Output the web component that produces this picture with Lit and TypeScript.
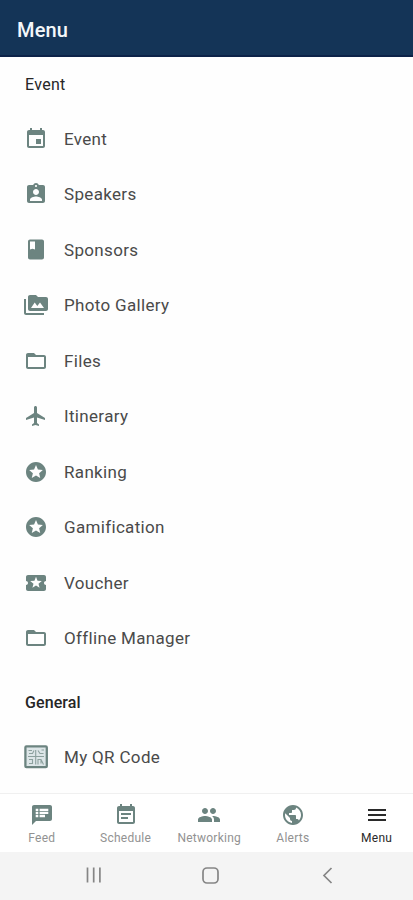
import { LitElement, html, css, svg } from "lit";
import { customElement } from "lit/decorators.js";

const icons: Record<string, string> = {
  event:
    "M17 12h-5v5h5v-5zM16 1v2H8V1H6v2H5c-1.11 0-1.99.9-1.99 2L3 19c0 1.1.89 2 2 2h14c1.1 0 2-.9 2-2V5c0-1.1-.9-2-2-2h-1V1h-2zm3 18H5V8h14v11z",
  speakers:
    "M19 3h-4.18C14.4 1.84 13.3 1 12 1c-1.3 0-2.4.84-2.82 2H5c-1.1 0-2 .9-2 2v14c0 1.1.9 2 2 2h14c1.1 0 2-.9 2-2V5c0-1.1-.9-2-2-2zm-7 0c.55 0 1 .45 1 1s-.45 1-1 1-1-.45-1-1 .45-1 1-1zm0 4c1.66 0 3 1.34 3 3s-1.34 3-3 3-3-1.34-3-3 1.34-3 3-3zm6 12H6v-1.4c0-2 4-3.1 6-3.1s6 1.1 6 3.1V19z",
  book: "M18 1.500H6c-1.1 0-2 .9-2 2v16c0 1.1.9 2 2 2h12c1.1 0 2-.9 2-2v-16c0-1.1-.9-2-2-2zM6 3.500h5v8l-2.500-.8L6 11.500v-8z",
  gallery:
    "M2 6H0v14c0 1.100.9 2 2 2h18v-2H2V6zm20-2h-8l-2-2H6c-1.1 0-1.990.9-1.990 2L4 16c0 1.1.9 2 2 2h16c1.1 0 2-.9 2-2V6c0-1.1-.9-2-2-2zM7 15l3.700-5.500 2.600 3.500 2.700-3.500L20 15H7z",
  folder:
    "M20 6h-8l-2-2H4c-1.1 0-1.99.9-1.99 2L2 18c0 1.1.9 2 2 2h16c1.1 0 2-.9 2-2V8c0-1.1-.9-2-2-2zm0 12H4V8h16v10z",
  plane:
    "M21 16v-2l-8-5V3.500c0-.83-.67-1.500-1.500-1.500S10 2.670 10 3.500V9l-8 5v2l8-2.500V19l-2 1.500V22l3.500-1 3.500 1v-1.500L13 19v-5.500l8 2.500z",
  star: "M11.99 2C6.47 2 2 6.48 2 12s4.47 10 9.99 10C17.52 22 22 17.52 22 12S17.52 2 11.99 2zm4.240 16L12 15.450 7.770 18l1.120-4.810-3.730-3.230 4.920-.42L12 5l1.920 4.530 4.920.42-3.730 3.230L16.230 18z",
  ticket:
    "M20 12c0-1.1.9-2 2-2V6c0-1.1-.9-2-2-2H4c-1.1 0-1.99.9-1.99 2v4c1.1 0 1.99.9 1.99 2s-.89 2-2 2v4c0 1.1.9 2 2 2h16c1.1 0 2-.9 2-2v-4c-1.1 0-2-.9-2-2zm-4.420 4.800L12 14.500l-3.580 2.300 1.080-4.120-3.290-2.690 4.240-.25L12 5.800l1.540 3.950 4.240.25-3.290 2.690 1.090 4.110z",
  feed: "M20 2H4c-1.1 0-1.99.9-1.99 2L2 22l4-4h14c1.1 0 2-.9 2-2V4c0-1.1-.9-2-2-2zM8.300 14.300H5.700v-2.500h2.600v2.500zm0-3.200H5.700V8.800h2.600v2.300zm0-3.100H5.700V5.700h2.600V8zm6.700 6.300H9.600v-2.500H15v2.500zm3.300-3.200H9.600V8.800h8.700v2.300zm0-3.100H9.600V5.700h8.700V8z",
  schedule:
    "M17 10H7v2h10v-2zm2-7h-1V1h-2v2H8V1H6v2H5c-1.11 0-1.99.9-1.99 2L3 19c0 1.1.89 2 2 2h14c1.1 0 2-.9 2-2V5c0-1.1-.9-2-2-2zm0 16H5V8h14v11zm-5-5H7v2h7v-2z",
  people:
    "M16 11c1.66 0 2.99-1.34 2.99-3S17.66 5 16 5c-1.66 0-3 1.34-3 3s1.34 3 3 3zm-8 0c1.66 0 2.99-1.34 2.99-3S9.66 5 8 5C6.34 5 5 6.34 5 8s1.34 3 3 3zm0 2c-2.33 0-7 1.17-7 3.5V19h14v-2.5c0-2.33-4.67-3.5-7-3.5zm8 0c-.29 0-.62.02-.97.05 1.16.84 1.97 1.97 1.97 3.45V19h6v-2.5c0-2.33-4.67-3.5-7-3.5z",
  globe:
    "M12 2C6.48 2 2 6.48 2 12s4.48 10 10 10 10-4.48 10-10S17.52 2 12 2zm-1 17.93c-3.95-.49-7-3.85-7-7.93 0-.62.08-1.21.21-1.79L9 15v1c0 1.1.9 2 2 2v1.93zm6.9-2.54c-.26-.81-1-1.39-1.9-1.39h-1v-3c0-.55-.45-1-1-1H8v-2h2c.55 0 1-.45 1-1V7h2c1.1 0 2-.9 2-2v-.41c2.93 1.19 5 4.06 5 7.41 0 2.08-.8 3.97-2.1 5.39z",
  menu: "M3 18h18v-2H3v2zm0-5h18v-2H3v2zm0-7v2h18V6H3z",
};

const qr = svg`
  <rect x="1.400" y="1.400" width="21.400" height="20.800" rx="1" fill="#dde6e8" stroke="currentColor" stroke-width="2.300"/>
  <g fill="none" stroke="currentColor" stroke-width="1.100" opacity=".7">
    <path d="M4.500 5.500h3.500M5 8.500h3.500l1.500-3M14 5.500l2 3h3.500M17.500 5h2.500"/>
    <path d="M4 11.500h16M11.700 5v14.500M5 14.500h3.500v4H5M14 19.500v-5h3l2.500 5M17 14.500v4"/>
  </g>`;

const icon = (name: string) => html`<svg class="icon" viewBox="0 0 24 24">
  ${name === "qr" ? qr : svg`<path fill="currentColor" d=${icons[name]}></path>`}
</svg>`;

const eventItems = [
  ["event", "Event"],
  ["speakers", "Speakers"],
  ["book", "Sponsors"],
  ["gallery", "Photo Gallery"],
  ["folder", "Files"],
  ["plane", "Itinerary"],
  ["star", "Ranking"],
  ["star", "Gamification"],
  ["ticket", "Voucher"],
  ["folder", "Offline Manager"],
];

const tabs = [
  ["feed", "Feed"],
  ["schedule", "Schedule"],
  ["people", "Networking"],
  ["globe", "Alerts"],
  ["menu", "Menu"],
];

@customElement("app-root")
export class AppRoot extends LitElement {
  static styles = css`
    :host {
      display: flex;
      flex-direction: column;
      height: 900px;
      overflow: hidden;
      background: #fefefe;
      color: #4a4a4a;
      font-family: Roboto, "Liberation Sans", sans-serif;
    }
    .header {
      box-sizing: border-box;
      flex: none;
      height: 57px;
      padding: 4px 17px 0;
      display: flex;
      align-items: center;
      background: #143457;
      border-bottom: 2px solid #0c2248;
      color: #f4f7fa;
      font-size: 20px;
      font-weight: 500;
      letter-spacing: 0.15px;
    }
    .list {
      flex: 1;
      min-height: 0;
      overflow: hidden;
    }
    .heading {
      display: flex;
      align-items: center;
      height: 54px;
      padding-left: 25px;
      color: #262626;
      font-size: 16px;
      font-weight: 500;
      letter-spacing: 0.1px;
    }
    .first {
      font-weight: 400;
      letter-spacing: 0.3px;
    }
    .general {
      margin-top: 9px;
    }
    .row {
      display: flex;
      align-items: center;
      height: 55.5px;
      padding-left: 24px;
      gap: 16px;
      font-size: 17px;
      letter-spacing: 0.33px;
    }
    .icon {
      flex: none;
      display: block;
      width: 24px;
      height: 24px;
      color: #6c8480;
    }
    .tabs {
      flex: none;
      box-sizing: border-box;
      height: 59px;
      display: grid;
      grid-template-columns: repeat(5, 83.7px);
      border-top: 1px solid #f0f0f0;
      background: #fff;
    }
    .tab {
      display: flex;
      flex-direction: column;
      align-items: center;
      padding-top: 9px;
      color: #929292;
      font-size: 12px;
      line-height: 14px;
      letter-spacing: 0.25px;
      gap: 4px;
    }
    .tab:last-child,
    .tab:last-child .icon {
      color: #2a2a2a;
    }
    .system {
      flex: none;
      height: 48px;
      background: #f4f4f4;
      display: flex;
    }
    .keys {
      width: 413px;
      height: 48px;
    }
  `;

  render() {
    return html`
      <header class="header">Menu</header>
      <main class="list">
        <div class="heading first">Event</div>
        ${eventItems.map(([i, t]) => html`<div class="row">${icon(i)}<span>${t}</span></div>`)}
        <div class="heading general">General</div>
        <div class="row">${icon("qr")}<span>My QR Code</span></div>
      </main>
      <nav class="tabs">
        ${tabs.map(([i, t]) => html`<div class="tab">${icon(i)}<span>${t}</span></div>`)}
      </nav>
      <footer class="system">
        <svg class="keys" viewBox="0 0 413 48" fill="none" stroke="#858585" stroke-width="1.700">
          <path d="M87.500 15.500v15M93.700 15.500v15M99.900 15.500v15" />
          <rect x="203" y="16" width="15" height="15" rx="4" />
          <path d="M331.500 16l-7.500 7.500 7.500 7.500" />
        </svg>
      </footer>
    `;
  }
}
